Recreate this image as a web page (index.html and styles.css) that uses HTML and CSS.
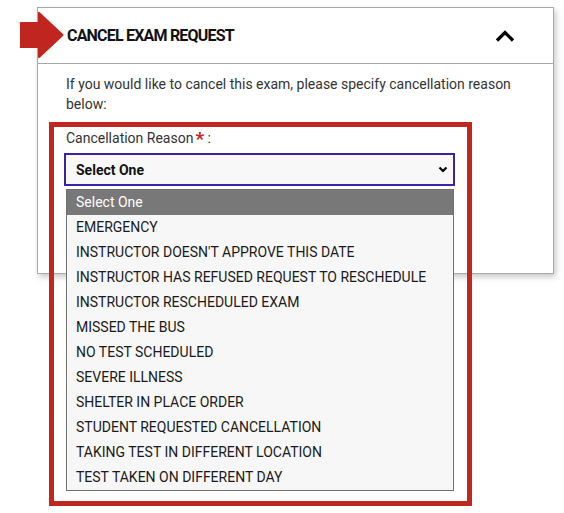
FILE: index.html
```html
<!DOCTYPE html>
<html lang="en">
<head>
    <meta charset="UTF-8">
    <meta name="viewport" content="width=device-width, initial-scale=1.0">
    <title>Cancel Exam Request</title>
    <link rel="stylesheet" href="styles.css">
</head>
<body>
    <div class="page">
        <div class="card">
            <div class="card-header">
                <h3 class="card-title">CANCEL EXAM REQUEST</h3>
                <svg class="chevron-up" width="20" height="12" viewBox="0 0 20 12">
                    <polyline points="2,10.5 10,2.5 18,10.5" fill="none" stroke="#000" stroke-width="3.2"/>
                </svg>
            </div>
            <div class="card-body">
                <p class="intro">If you would like to cancel this exam, please specify cancellation reason below:</p>
                <div class="field">
                    <label class="field-label">Cancellation Reason<span class="required">*</span> :</label>
                    <div class="select-box">
                        <span>Select One</span>
                        <svg width="10" height="7" viewBox="0 0 10 7">
                            <polyline points="1.5,1.5 5,5 8.5,1.5" fill="none" stroke="#000" stroke-width="2.2"/>
                        </svg>
                    </div>
                </div>
            </div>
        </div>

        <!-- open dropdown list -->
        <ul class="options">
            <li class="active">Select One</li>
            <li>EMERGENCY</li>
            <li>INSTRUCTOR DOESN'T APPROVE THIS DATE</li>
            <li>INSTRUCTOR HAS REFUSED REQUEST TO RESCHEDULE</li>
            <li>INSTRUCTOR RESCHEDULED EXAM</li>
            <li>MISSED THE BUS</li>
            <li>NO TEST SCHEDULED</li>
            <li>SEVERE ILLNESS</li>
            <li>SHELTER IN PLACE ORDER</li>
            <li>STUDENT REQUESTED CANCELLATION</li>
            <li>TAKING TEST IN DIFFERENT LOCATION</li>
            <li>TEST TAKEN ON DIFFERENT DAY</li>
        </ul>

        <!-- annotations -->
        <svg class="arrow" width="46" height="48" viewBox="0 0 46 48">
            <path d="M1 13 Q0 11 2 11 L19 11 L19 2 Q19 0 21 1.5 L44 23 Q45 24 44 25 L21 46.5 Q19 48 19 46 L19 37 L2 37 Q0 37 1 35 Z" fill="#c0261f"/>
        </svg>
        <div class="highlight"></div>
    </div>
</body>
</html>
```

FILE: styles.css
```css
body {
    margin: 0;
    font-family: Roboto, 'Noto Sans', sans-serif;
    background-color: #fff;
    color: #333;
}
.page {
    position: relative;
    width: 564px;
    height: 513px;
    padding: 7px 0 0 37px;
    box-sizing: border-box;
}
.card {
    width: 517px;
    height: 267px;
    box-sizing: border-box;
    border: 1px solid #a8a8a8;
    background-color: #fff;
    box-shadow: 2px 3px 6px rgba(0, 0, 0, 0.22);
}
.card-header {
    display: flex;
    justify-content: space-between;
    align-items: center;
    height: 55px;
    padding: 0 38px 0 29px;
    border-bottom: 1px solid #a8a8a8;
}
.card-title {
    margin: 0;
    font-size: 16px;
    font-weight: 700;
    color: #111;
    letter-spacing: -0.8px;
}
.chevron-up {
    display: block;
    margin-top: 1px;
}
.card-body {
    padding: 10px 40px 0 28px;
}
.intro {
    margin: 0;
    font-size: 14px;
    line-height: 20px;
    color: #333;
}
.field {
    margin-top: 15px;
}
.field-label {
    display: block;
    font-size: 14px;
    line-height: 18px;
    color: #333;
}
.required {
    color: #c0261f;
    font-size: 19px;
    font-weight: 700;
    vertical-align: -2px;
    margin-left: 2px;
}
.select-box {
    display: flex;
    justify-content: space-between;
    align-items: center;
    width: 391px;
    height: 33px;
    margin: 5px 0 0 -2px;
    padding: 0 5px 0 10px;
    box-sizing: border-box;
    border: 2px solid #3a22a0;
    background-color: #f8f8f8;
    font-size: 14px;
    font-weight: 700;
    color: #111;
}
.select-box svg {
    display: block;
}
.options {
    position: absolute;
    left: 66px;
    top: 189px;
    width: 388px;
    margin: 0;
    padding: 0;
    list-style: none;
    box-sizing: border-box;
    border: 1px solid #707070;
    background-color: #f7f7f7;
}
.options li {
    height: 25px;
    line-height: 25px;
    padding-left: 9px;
    font-size: 14px;
    color: #1a1a1a;
}
.options li.active {
    background-color: #787878;
    color: #fff;
}
.arrow {
    position: absolute;
    left: 19px;
    top: 11px;
}
.highlight {
    position: absolute;
    left: 49px;
    top: 122px;
    width: 423px;
    height: 384px;
    box-sizing: border-box;
    border: 5px solid #c0281f;
}
```
